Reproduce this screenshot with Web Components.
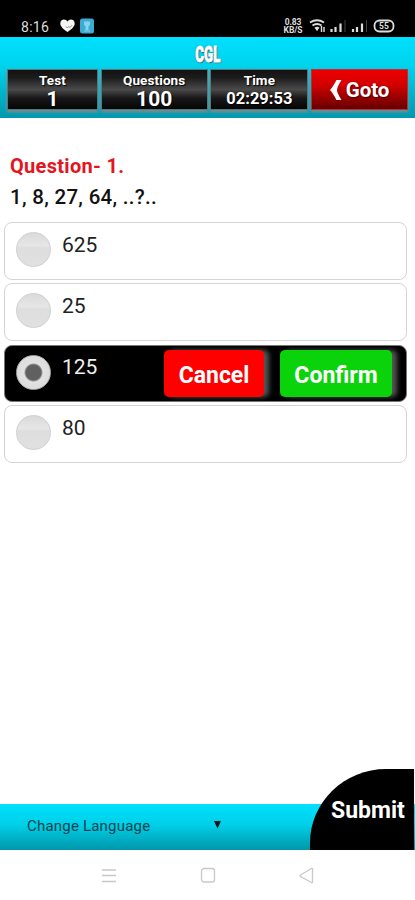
<!DOCTYPE html>
<html lang="en">
<head>
<meta charset="utf-8">
<title>CGL Test</title>
<style>
html,body{margin:0;height:100%;background:#fff;overflow:hidden}
</style>
</head>
<body>
<quiz-app></quiz-app>
<script>
const define = (name, html, setup) => {
  const t = document.createElement('template');
  t.innerHTML = html;
  customElements.define(name, class extends HTMLElement {
    constructor() {
      super();
      this.attachShadow({mode: 'open'}).append(t.content.cloneNode(true));
      if (setup) setup(this);
    }
  });
};

define('status-bar', `
<style>
:host{display:flex;box-sizing:border-box;height:37px;background:#000;color:#dcdcdc;padding:17px 0 0 21px;font:400 14px/20px Roboto,sans-serif}
.time{width:39px;letter-spacing:.3px}
svg{display:block}
.heart{margin:2px 5px 0 0}
.app{margin-top:1px}
.rate{margin:1px 0 0 189px;width:20px;text-align:center;font:700 8.500px/8px Roboto,sans-serif;letter-spacing:-.1px}
.rate span{display:block;height:8px;line-height:8px}
.icons{margin:-1px 0 0 6px}
</style>
<span class="time">8:16</span>
<svg class="heart" width="15" height="14" viewBox="0 0 15 14"><path d="M7.5 13C3.500 10 .3 7.600.3 4.400.3 2 2 .6 4 .6c1.500 0 2.700.8 3.500 2 .8-1.200 2-2 3.500-2 2 0 3.700 1.400 3.700 3.800 0 3.200-3.200 5.600-7.200 8.600Z" fill="#f5f5f5"/><path d="M6 7.500l1.300 1.500 1.500-1.500 1 1 2.500-2.500" fill="none" stroke="#777" stroke-width=".8"/></svg>
<svg class="app" width="14" height="17" viewBox="0 0 14 17"><rect x="0" y=".5" width="14" height="15" rx="2.500" fill="#3aabd4"/><path d="M4 3.500h6v3l-1.500 2v3.500h-3V8.500L4 6.500Z" fill="#86d3ec"/><path d="M4 13h6" stroke="#86d3ec"/></svg>
<span class="rate"><span>0.83</span><span>KB/S</span></span>
<svg class="icons" width="90" height="18" viewBox="310 16 90 18" fill="none" stroke="#ddd">
<path d="M311 22.500q7-4.500 14 0M313.500 25.500q4.500-3 9 0M316 28.500q2-1.300 4 0" stroke-width="2"/><path d="M318 28v2.500" stroke-width="2"/><path d="M322.500 26v6M325 27v5" stroke-width="1.400"/>
<path d="M332.500 29v3M336.500 27v5M341.500 23.500v8.500M354 29v3M358 27v5M363 23.500v8.500" stroke-width="2.200"/><path d="M346 20v12M367.500 20v12" stroke="#444" stroke-width="1"/>
<rect x="375.500" y="20.500" width="19" height="11" rx="5" stroke-width="1.800"/><text x="380" y="29" font-family="Roboto,sans-serif" font-size="8.500" font-weight="700" fill="#ddd" stroke="none">55</text></svg>
`);

define('stat-tile', `
<style>
:host{display:block;box-sizing:border-box;height:41px;padding-top:3px;border:1px solid #55777b;background:linear-gradient(#111 0%,#1c1c1c 20%,#4a4a4a 50%,#181818 72%,#050505 100%);color:#fff;text-align:center;box-shadow:0 2px 3px #888;font-family:Roboto,sans-serif;font-weight:700;text-shadow:1px 1px 1px #000}
.label{font-size:13.500px;line-height:15px;letter-spacing:.1px}
.value{font-size:var(--value-size,21px);line-height:20px;margin-top:1px}
</style>
<div class="label"><slot name="label"></slot></div><div class="value"><slot></slot></div>
`);

define('goto-button', `
<style>
:host{display:flex;box-sizing:border-box;height:41px;align-items:center;justify-content:center;gap:4px;border:1px solid #a34;background:linear-gradient(#ee0000,#d00000 40%,#650000);color:#fff;font:700 20.500px/24px Roboto,sans-serif;box-shadow:0 2px 3px #888;text-shadow:1px 1px 2px #400}
svg{display:block}
</style>
<svg width="12" height="20" viewBox="0 0 12 20"><path d="M6.500 0h5Q7 7 7 10t4.500 10h-5Q2.500 12.500 0 10 2.500 7.500 6.500 0Z" fill="#fff"/></svg><slot></slot>
`);

define('test-header', `
<style>
:host{display:block;box-sizing:border-box;height:81px;background:linear-gradient(#00e0ff,#00d4ed 35%,#0098ae);padding:5px 7px 0}
h1{margin:0;height:27px;text-align:center;color:#fff;font:900 19px/25px Roboto,sans-serif;text-shadow:1px 1px 1px #345,0 0 2px #456}
h1 span{display:inline-block;transform:scale(.7,1.18);-webkit-text-stroke:.7px #fff}
.row{display:grid;grid-template-columns:91px 107px 98px 97px;column-gap:2.700px}
</style>
<h1><span>CGL</span></h1>
<div class="row">
<stat-tile><span slot="label">Test</span>1</stat-tile>
<stat-tile><span slot="label">Questions</span>100</stat-tile>
<stat-tile style="--value-size:16.500px"><span slot="label">Time</span>02:29:53</stat-tile>
<goto-button>Goto</goto-button>
</div>
`);

define('radio-dot', `
<style>
:host{display:block;box-sizing:border-box;width:35px;height:35px;border-radius:50%;border:1px solid #d0d0d0;background:linear-gradient(#dadada,#e6e6e6 38%,#dedede 45%,#e0e0e0)}
:host([on]){border-color:#aaa;background:radial-gradient(circle,#606060 0 7.500px,#999 8.500px,#e2e2e2 9.500px,#ddd 15px,#eee)}
</style>
`);

define('answer-option', `
<style>
:host{display:flex;box-sizing:border-box;height:58px;border:1.500px solid #d4d4d4;border-radius:8px;background:#fff;color:#222;padding:9px 13px 0 11px;font:400 21px/26px Roboto,sans-serif}
:host([selected]){background:#000;color:#eee;border-color:#777;height:57px}
.text{margin-left:11px;flex:1}
:host([selected]) .text{margin-top:-1px}
.actions{display:flex;gap:16px;margin:-5px 1px 0 0}
</style>
<radio-dot></radio-dot><span class="text"><slot></slot></span><div class="actions"><slot name="actions"></slot></div>
`, el => { if (el.hasAttribute('selected')) el.shadowRoot.querySelector('radio-dot').setAttribute('on', ''); });

define('action-button', `
<style>
:host{display:block;width:100px;height:47px;border-radius:5px;background:#f00;color:#fff;text-align:center;font:700 23px/51px Roboto,sans-serif;box-shadow:5px 0 5px #555}
:host([kind=confirm]){width:112px;background:#0bd30b}
</style><slot></slot>
`);

define('language-bar', `
<style>
:host{display:flex;box-sizing:border-box;height:46px;padding:9px 0 0 27px;background:linear-gradient(#00e0fd,#00d0e8 45%,#0096aa);color:#064450;font:400 15px/26px Roboto,sans-serif}
.lang{width:187px;letter-spacing:.2px}
svg{display:block;margin-top:8px}
</style>
<span class="lang"><slot></slot></span><svg width="7" height="8" viewBox="0 0 7 8"><path d="M0 0h7L3.500 7.500Z" fill="#041a1e"/></svg>
`);

define('submit-button', `
<style>
:host{display:block;box-sizing:border-box;width:104px;height:81px;border-top-left-radius:76px 74px;background:#000;color:#fff;padding:28px 0 0 21px;font:700 23px/28px Roboto,sans-serif;white-space:nowrap}
</style><slot></slot>
`);

define('system-nav', `
<style>
:host{display:flex;height:50px;background:#fff;padding:17px 0 0 101px;box-sizing:border-box;gap:83px}
svg{display:block;fill:none;stroke:#c8c8c8;stroke-width:1.300}
</style>
<svg width="16" height="18"><path d="M1 3h14M1 8.500h14M1 14.500h14"/></svg>
<svg width="16" height="18"><rect x="1.500" y="1.500" width="13" height="13.500" rx="2.500"/></svg>
<svg width="16" height="18"><path d="M13.500 2v13q0 1-1 .5L1.500 9.500q-1-.7 0-1.500L12.500 1.500q1-.5 1 .5Z"/></svg>
`);

define('quiz-app', `
<style>
:host{display:flex;flex-direction:column;width:415px;height:900px;background:#fff;color:#111;position:relative;font-family:Roboto,sans-serif}
main{flex:1;padding:34px 8px 0 4px}
h2,p{margin:0 0 0 6px}
h2{font:700 20px/28px Roboto,sans-serif;color:#e41420;letter-spacing:.3px}
p{font:500 20.500px/28px Roboto,sans-serif;margin-top:3px;letter-spacing:.3px}
.options{margin-top:11px;display:grid;grid-template-columns:403px;gap:3.300px}
submit-button{position:absolute;right:1px;bottom:50px}
</style>
<status-bar></status-bar>
<test-header></test-header>
<main>
<h2>Question- 1.</h2>
<p>1, 8, 27, 64, ..?..</p>
<div class="options">
<answer-option>625</answer-option>
<answer-option>25</answer-option>
<answer-option selected>125<action-button slot="actions">Cancel</action-button><action-button slot="actions" kind="confirm">Confirm</action-button></answer-option>
<answer-option>80</answer-option>
</div>
</main>
<language-bar>Change Language</language-bar>
<system-nav></system-nav>
<submit-button>Submit</submit-button>
`);
</script>
</body>
</html>
